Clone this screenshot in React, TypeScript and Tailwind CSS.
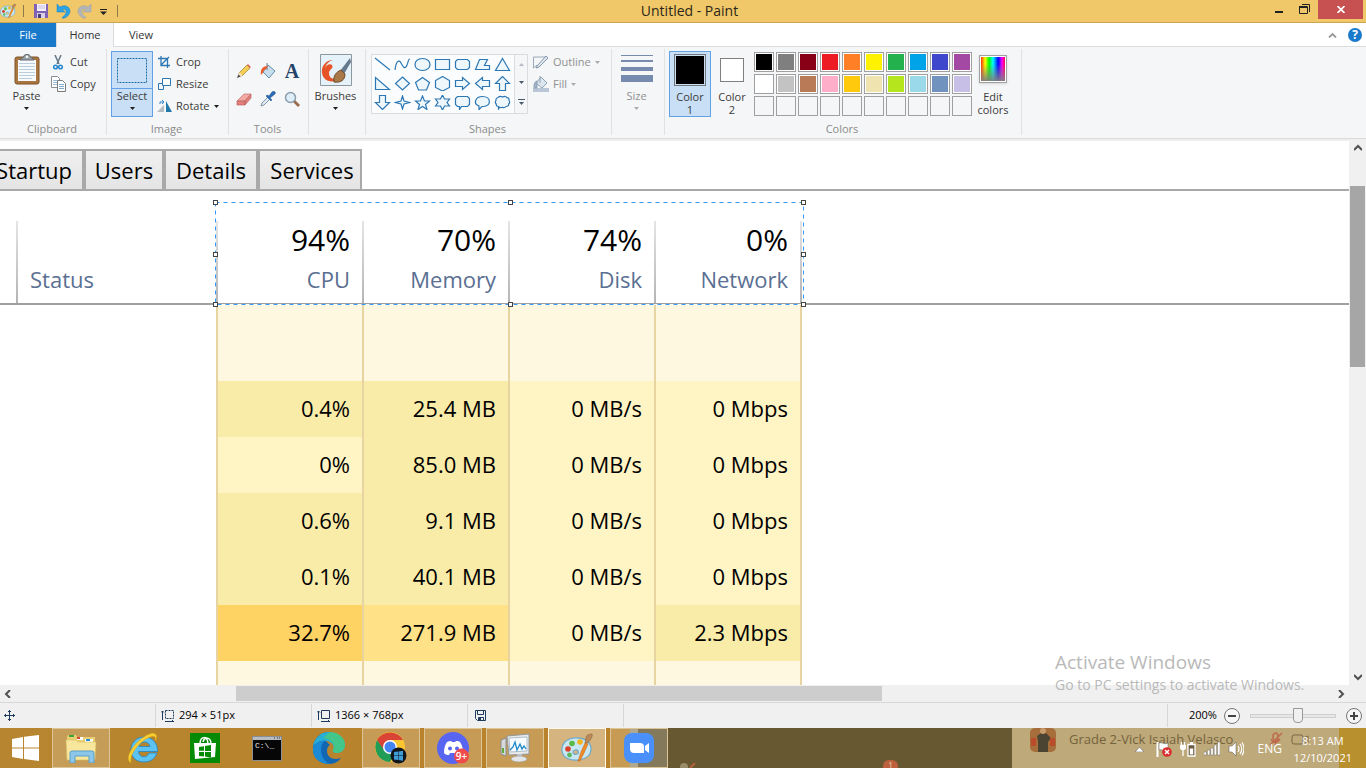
import React from "react";

type Kids = { children?: React.ReactNode };

const Svg = ({ w, h, vb, cls = "", children }: { w: number; h: number; vb?: string; cls?: string } & Kids) => (
  <svg width={w} height={h} viewBox={vb ?? `0 0 ${w} ${h}`} className={`block shrink-0 ${cls}`} fill="none" aria-hidden="true">
    {children}
  </svg>
);

const Caret = ({ color = "#1e1e1e" }: { color?: string }) => (
  <Svg w={5} h={3}>
    <path d="M0 0h5L2.5 3z" fill={color} />
  </Svg>
);

const Palette = ({ size }: { size: number }) => (
  <Svg w={size} h={size} vb="0 0 32 32">
    <path d="M13 6C5 7 0 12 1 19c1 7 8 10 17 9 7-1 12-5 12-11 0-8-8-12-17-11zm3 16c-2 1-4 0-4-2s4-3 5-1 0 3-1 3z" fill="#c9e6f3" stroke="#6aa9c9" strokeWidth="1.2" />
    <circle cx="7" cy="17" r="2.8" fill="#d9402b" />
    <circle cx="11" cy="11.500" r="2.800" fill="#58b947" />
    <circle cx="19" cy="10" r="2.800" fill="#f1b51c" />
    <circle cx="8.500" cy="23" r="2.400" fill="#5cb85c" />
    <path d="M17 29l3-9 4-9 3 1-4 9-4 8z" fill="#f08a24" stroke="#bd5f12" strokeWidth=".5" />
    <path d="M24 11l1-5c0-3 3-4 6-4 1 2-1 5-4 9z" fill="#b98a5a" stroke="#8a5c33" strokeWidth=".5" />
  </Svg>
);

const TitleBar = () => (
  <header className="flex h-[23px] shrink-0 items-center border-b border-[#c9a551] bg-[#f0c869]">
    <div className="flex flex-1 items-center">
      <Palette size={16} />
      <span className="ml-[7px] h-3 w-px bg-[#8f7a4c]" />
      <button aria-label="Save" className="ml-2.5">
        <Svg w={14} h={14}>
          <path d="M0 0h14v14H0z" fill="#8161b4" />
          <path d="M3 0h9v7H3z" fill="#f4f0fa" />
          <path d="M3 9h8v5H3z" fill="#d8d0e4" />
          <path d="M4 10h3v4H4z" fill="#4b3a78" />
          <path d="M4 2h7M4 4h7" stroke="#cabfe0" />
        </Svg>
      </button>
      <button aria-label="Undo" className="ml-2">
        <Svg w={15} h={15}>
          <path d="M1 0v8h8L6.500 5.500C9 4.500 10.500 6 10 8.500c-.4 2-2 3.500-4 5l1 1c4-1 7-4 7-7.500C14 3 9 0 4 3z" fill="#2ba3e6" stroke="#187fc0" strokeWidth=".5" />
        </Svg>
      </button>
      <button aria-label="Redo" className="ml-1.5">
        <Svg w={15} h={15}>
          <path d="M14 0v8H6l2.500-2.500C6 4.500 4.500 6 5 8.500c.4 2 2 3.500 4 5l-1 1c-4-1-7-4-7-7.500C1 3 6 0 11 3z" fill="#b3b6b9" stroke="#999c9f" strokeWidth=".5" />
        </Svg>
      </button>
      <button aria-label="Customize Quick Access Toolbar" className="ml-2 mt-0.5">
        <Svg w={7} h={6}>
          <path d="M0 .5h7" stroke="#222" />
          <path d="M0 2.500h7L3.500 6z" fill="#222" />
        </Svg>
      </button>
      <span className="ml-2.5 h-3 w-px bg-[#8f7a4c]" />
    </div>
    <h1 className="pl-4 font-['Open_Sans',sans-serif] text-sm text-[#2c2718]">Untitled - Paint</h1>
    <div className="flex flex-1 items-start justify-end gap-4 self-stretch pr-[3px]">
      <button aria-label="Minimize" className="mt-[11px]">
        <Svg w={8} h={2}><path d="M0 0h8v2H0z" fill="#222" /></Svg>
      </button>
      <button aria-label="Restore" className="mt-1">
        <Svg w={11} h={10}>
          <path d="M3 .5h7.500V8" stroke="#222" />
          <path d="M.5 3h8v6.500H.5z" stroke="#222" />
          <path d="M0 3h8.500" stroke="#222" strokeWidth="2" />
        </Svg>
      </button>
      <button aria-label="Close" className="-ml-2 flex h-[19px] w-[45px] items-center justify-center bg-[#c75050]">
        <Svg w={8} h={7}><path d="M.5 0l7 7M7.500 0l-7 7" stroke="#fff" strokeWidth="1.700" /></Svg>
      </button>
    </div>
  </header>
);

const TabBar = () => (
  <nav className="flex h-6 shrink-0 bg-white text-[11px] text-[#333]">
    <button className="w-14 bg-[#1979ca] text-white">File</button>
    <button className="w-[58px] border-x border-[#dadbdc] bg-[#f5f6f7]">Home</button>
    <button className="w-[54px] border-b border-[#dadbdc] pt-0.5">View</button>
    <div className="flex flex-1 items-center justify-end gap-[11px] border-b border-[#dadbdc] pr-1">
      <button aria-label="Minimize the Ribbon">
        <Svg w={9} h={6}><path d="M1 5.500L4.500 2 8 5.500" stroke="#999" strokeWidth="1.800" /></Svg>
      </button>
      <button aria-label="Help" className="flex size-3.5 items-center justify-center rounded-full bg-[#1979ca] text-xs font-bold leading-3 text-white">
        ?
      </button>
    </div>
  </nav>
);

const Group = ({ label, w, children }: { label?: string; w: string } & Kids) => (
  <section className={`flex shrink-0 flex-col justify-between border-r border-[#e0e1e3] pt-0.5 ${w}`}>
    <div className="flex h-[68px] items-start">{children}</div>
    <div className="h-3 pr-0.5 text-center leading-3 text-[#8c8c8c]">{label}</div>
  </section>
);

const LineBtn = ({ icon, text, dim, caret }: { icon: React.ReactNode; text: string; dim?: boolean; caret?: boolean }) => (
  <button className={`flex h-[22px] items-center gap-1 ${dim ? "text-[#8f9092]" : ""}`}>
    <span className="flex w-4 justify-center">{icon}</span>
    <span>{text}</span>
    {caret && <Caret color={dim ? "#aaacae" : "#1e1e1e"} />}
  </button>
);

const B = "#2d78b4";
const shapes: { name: string; d: string }[] = [
  { name: "Line", d: "M1 1l15 12" },
  { name: "Curve", d: "M1 13C2 4 5 2 7 6s4 7 6 2 1-6 3-6" },
  { name: "Oval", d: "M8.500 1.500c10 0 10 12 0 12s-10-12 0-12z" },
  { name: "Rectangle", d: "M1.500 2.500h14v10h-14z" },
  { name: "Rounded rectangle", d: "M3.500 2.500h10l2 2v6l-2 2h-10l-2-2v-6z" },
  { name: "Polygon", d: "M5.500 2.500h8l-3 6h5v4h-14z" },
  { name: "Triangle", d: "M8.500 1.500l7 12h-14z" },
  { name: "Right triangle", d: "M1.500 1.500v12h14z" },
  { name: "Diamond", d: "M8.500 1l7 6.500-7 6.500-7-6.500z" },
  { name: "Pentagon", d: "M8.500 1.500l7 5-3 7.500h-8l-3-7.500z" },
  { name: "Hexagon", d: "M8.500.5l7 4v7l-7 3.500-7-3.500v-7z" },
  { name: "Right arrow", d: "M1.500 4.500h7v-3l7 6-7 6v-3h-7z" },
  { name: "Left arrow", d: "M15.500 4.500h-7v-3l-7 6 7 6v-3h7z" },
  { name: "Up arrow", d: "M5.500 14.500v-7h-4l7-7 7 7h-4v7z" },
  { name: "Down arrow", d: "M5.500.5v7h-4l7 7 7-7h-4v-7z" },
  { name: "Four-point star", d: "M8.500 1l1.500 5 5.500 1.500L10 9l-1.500 5L7 9 1.500 7.500 7 6z" },
  { name: "Five-point star", d: "M8.500 1l2 5h5l-4 3.500 1.500 5-4.500-3-4.500 3 1.500-5-4-3.500h5z" },
  { name: "Six-point star", d: "M8.500 0l2 4h5l-2.500 3.500L15.500 11h-5l-2 4-2-4h-5L4 7.500 1.500 4h5z" },
  { name: "Rounded callout", d: "M3.500 1.500h10l2 2v6l-2 2h-6l-2 3v-3h-2l-2-2v-6z" },
  { name: "Oval callout", d: "M8.500 1.500c9 0 9 10 1 10H8l-3 3v-3.500C-1 9 1 1.500 8.500 1.500z" },
  { name: "Cloud callout", d: "M4 2.500q2-2 4.500-.5 3-1.500 4.500.7 2.500.3 2 2.800 1.500 2-.3 3.500.2 2.500-2.700 2.500-1.500 2-3.500.7-1.500.8-2.800 0L4.500 14v-2.500Q2 11.500 2.300 9 .500 7.500 2 5.500 1.500 3 4 2.500z" },
];

const Shapes = () => (
  <div className="ml-[5px] mt-[3px] flex border border-[#dadbdc] bg-[#fbfcfd]">
    <div className="grid grid-cols-7 pb-px">
      {shapes.map((s) => (
        <button key={s.name} aria-label={s.name} className="flex h-[19px] w-5 items-center justify-center">
          <Svg w={17} h={15}>
            <path d={s.d} stroke={B} strokeWidth="1.200" fill={s.name === "Line" || s.name === "Curve" ? "none" : "#eef7fc"} />
          </Svg>
        </button>
      ))}
    </div>
    <div className="ml-0.5 flex w-[13px] flex-col items-center justify-around border-l border-[#dadbdc] bg-[#f5f6f7]">
      <button aria-label="Previous shapes"><Svg w={5} h={3}><path d="M0 3h5L2.500 0z" fill="#b4bac2" /></Svg></button>
      <button aria-label="Next shapes"><Caret color="#4a5b70" /></button>
      <button aria-label="More shapes">
        <Svg w={7} h={6}><path d="M0 .5h7" stroke="#4a5b70" /><path d="M1 3h5L3.500 6z" fill="#4a5b70" /></Svg>
      </button>
    </div>
  </div>
);

const swatches = [
  ["bg-black", "Black"], ["bg-[#7f7f7f]", "Gray-50%"], ["bg-[#880015]", "Dark red"], ["bg-[#ed1c24]", "Red"], ["bg-[#ff7f27]", "Orange"],
  ["bg-[#fff200]", "Yellow"], ["bg-[#22b14c]", "Green"], ["bg-[#00a2e8]", "Turquoise"], ["bg-[#3f48cc]", "Indigo"], ["bg-[#a349a4]", "Purple"],
  ["bg-white", "White"], ["bg-[#c3c3c3]", "Gray-25%"], ["bg-[#b97a57]", "Brown"], ["bg-[#ffaec9]", "Rose"], ["bg-[#ffc90e]", "Gold"],
  ["bg-[#efe4b0]", "Light yellow"], ["bg-[#b5e61d]", "Lime"], ["bg-[#99d9ea]", "Light turquoise"], ["bg-[#7092be]", "Blue-gray"], ["bg-[#c8bfe7]", "Lavender"],
];

const PasteIcon = () => (
  <Svg w={26} h={31}>
    <rect x="1" y="3" width="24" height="27" rx="2" fill="#a9763f" stroke="#7e5429" />
    <path d="M4 6h18v21H4z" fill="#f7fafc" />
    <path d="M5 9.500h16M5 12.500h16M5 15.500h16M5 18.500h16M5 21.500h16M5 24.500h13" stroke="#b9cddc" />
    <path d="M6 6c0-2 4-2 4-4s6-2 6 0 4 2 4 4z" fill="#9ba3aa" stroke="#5f666c" />
    <circle cx="13" cy="2.800" r="1.200" fill="#fff" />
  </Svg>
);

const ToolIcons = () => {
  const icons: [string, React.ReactNode][] = [
    ["Pencil", <><path d="M1 15l2-5 3 3z" fill="#444" /><path d="M3 10L11 2l3 3-8 8z" fill="#f5cf55" stroke="#9a7a2a" strokeWidth=".7" /><path d="M11 2l1-1 3 3-1 1z" fill="#e46a5e" /><path d="M2 11l1.500-1.500 3 3L5 14z" fill="#f6dfba" /></>],
    ["Fill with color", <><path d="M8 2l7 6-6 7-6-6z" fill="#c8deed" stroke="#648cab" /><path d="M7 0v7" stroke="#6b7b88" /><path d="M8 3C3 3 0 6 1 12c3-3 2-5 5-6z" fill="#eb5a2a" /></>],
    ["Text", null],
    ["Eraser", <><path d="M1 10l7-7h7l-6 7z" fill="#f3aaa5" stroke="#c4716d" strokeWidth=".7" /><path d="M1 10h8v4H1zM9 10l6-7v4l-6 7z" fill="#e47f7a" stroke="#b96561" strokeWidth=".7" /></>],
    ["Color picker", <><path d="M1 15l1-3 6-6 2 2-6 6z" fill="#dcebf5" stroke="#6a8297" strokeWidth=".8" /><path d="M6 5l5 5 1-1-2-2 5-4c1-2-1-4-3-2L9 5 7 4z" fill="#2a6cb5" stroke="#1c4a86" strokeWidth=".5" /></>],
    ["Magnifier", <><path d="M10 10l5 5" stroke="#9a6b4a" strokeWidth="2.800" /><circle cx="6.500" cy="6.500" r="5" fill="#deeffa" stroke="#8a9dad" strokeWidth="1.500" /></>],
  ];
  return (
    <div className="ml-[3px] mt-1.5 grid grid-cols-3">
      {icons.map(([n, i]) => (
        <button key={n} aria-label={n} className="flex h-7 w-6 items-center justify-center">
          {i ? <Svg w={16} h={16}>{i}</Svg> : <span className="font-['Liberation_Serif',serif] text-xl font-bold leading-6 text-[#26436b]">A</span>}
        </button>
      ))}
    </div>
  );
};

const Ribbon = () => (
  <div className="flex h-[92px] shrink-0 overflow-hidden border-b border-[#dadbdc] bg-[#f5f6f7] pb-[3px] pt-0.5 text-[11px] leading-[14px] text-[#3b3b3b]">
    <Group label="Clipboard" w="w-[107px]">
      <button className="ml-2 flex w-[37px] flex-col items-center pt-[3px]">
        <PasteIcon />
        <span className="mt-1">Paste</span>
        <span className="mt-1"><Caret /></span>
      </button>
      <div className="ml-[5px]">
        <LineBtn text="Cut" icon={<Svg w={10} h={15}><path d="M2 0l4 9M8 0L4 9" stroke="#64788a" strokeWidth="1.500" /><circle cx="2.500" cy="12" r="1.800" stroke="#2487ce" strokeWidth="1.500" /><circle cx="7.500" cy="12" r="1.800" stroke="#2487ce" strokeWidth="1.500" /></Svg>} />
        <LineBtn text="Copy" icon={<Svg w={15} h={16}><path d="M.5.500h6l2 2v9h-8z" fill="#fff" stroke="#8a8f94" /><path d="M2 4.500h4M2 6.500h4M2 8.500h4" stroke="#9bbbd4" /><path d="M6.500 4.500h5l3 3v8h-8z" fill="#fff" stroke="#777c81" /><path d="M8 8.500h5M8 10.500h5M8 12.500h5" stroke="#7faccd" /></Svg>} />
      </div>
    </Group>
    <Group label="Image" w="w-[122px]">
      <button className="ml-1 flex h-[66px] w-[42px] flex-col items-center border border-[#62a2e4] bg-[#c9dff5]">
        <span className="flex h-[37px] w-full items-center justify-center border-b border-[#62a2e4]">
          <Svg w={30} h={25}><path d="M.5.500h29v24H.5z" stroke="#1f6aa9" strokeDasharray="2 1" /></Svg>
        </span>
        <span>Select</span>
        <span className="mt-1"><Caret /></span>
      </button>
      <div className="ml-[3px]">
        <LineBtn text="Crop" icon={<Svg w={12} h={12}><path d="M3 0v9.500h9M0 2.500h9.500V12M3 9l8-8" stroke={B} strokeWidth="1.300" /></Svg>} />
        <LineBtn text="Resize" icon={<Svg w={13} h={12}><path d="M4.500.500h8v7h-8z" fill="#fff" stroke={B} /><path d="M4 5.500H.500v6h5V8" stroke={B} /></Svg>} />
        <LineBtn text="Rotate" caret icon={<Svg w={15} h={12}><path d="M0 12h7V5z" fill="#b4bcc3" /><path d="M9 12V1l6 11z" fill="#2079a9" /><path d="M3 4V2h4M5 0l2 2-2 2" stroke="#2f86cb" /></Svg>} />
      </div>
    </Group>
    <Group label="Tools" w="w-20"><ToolIcons /></Group>
    <Group w="w-[57px]">
      <button className="flex w-full flex-col items-center pr-[3px] pt-[3px]">
        <Svg w={32} h={32}>
          <path d="M.5.500h31v31H.5z" fill="#e5f2f9" stroke="#8f979e" />
          <path d="M13 6C6 6 1 12 2 19c1 8 10 11 17 6-6 1-10-1-10-6 0-4 5-4 3-8-2-2-6 0-7 3 1-4 4-7 8-8z" fill="#e75427" />
          <path d="M20 17l10-13 1 4-7 12z" fill="#64798d" />
          <path d="M14 28c-1-6 2-10 7-12l4 4c0 6-4 9-11 8z" fill="#a97a48" stroke="#6d4a28" />
        </Svg>
        <span className="mt-[3px]">Brushes</span>
        <span className="mt-1"><Caret /></span>
      </button>
    </Group>
    <Group label="Shapes" w="w-[246px]">
      <Shapes />
      <div className="ml-[5px]">
        <LineBtn dim caret text="Outline" icon={<Svg w={16} h={14}><path d="M12 2H.5v11L4 10" stroke="#9aa9ba" /><path d="M4 11L13 1l2 2-9 9-3 1z" fill="#dfe7ef" stroke="#8497ad" /></Svg>} />
        <LineBtn dim caret text="Fill" icon={<Svg w={16} h={16}><path d="M0 12h16v4H0z" fill="#b8c6d8" /><path d="M8 1l6 6-5 5-6-5z" fill="#dce6ef" stroke="#8fa1b4" /><path d="M7 0v7M4 5c-3 1-3 4-3 7h3z" stroke="#8fa1b4" fill="#9fb2c8" /></Svg>} />
      </div>
    </Group>
    <Group w="w-[53px]">
      <button className="flex w-full flex-col items-center pr-[3px] pt-1 text-[#8f9092]">
        <Svg w={32} h={32}><path d="M0 0h32v1H0zM0 5h32v2H0zM0 12h32v4H0zM0 20h32v7H0z" fill="#778bae" /></Svg>
        <span className="mt-0.5">Size</span>
        <span className="mt-1"><Caret color="#aaacae" /></span>
      </button>
    </Group>
    <Group label="Colors" w="w-[357px]">
      <button className="ml-1 flex h-[66px] w-[42px] flex-col items-center border border-[#62a2e4] bg-[#c9dff5] pt-0.5 leading-[13px]">
        <span className="size-8 border border-[#74777a] bg-black ring-1 ring-inset ring-[#c9dff5]" />
        <span className="mt-1">Color</span><span>1</span>
      </button>
      <button className="flex h-[66px] w-[42px] flex-col items-center pt-[7px] leading-[13px]">
        <span className="size-6 border border-[#808080] bg-white" />
        <span className="mt-2">Color</span><span>2</span>
      </button>
      <div className="ml-px mt-px grid grid-cols-10 gap-0.5">
        {swatches.map(([c, n]) => (
          <button key={n} aria-label={n} className={`size-5 border border-[#a0a0a0] ring-1 ring-inset ring-white ${c}`} />
        ))}
        {Array.from({ length: 10 }, (_, i) => (
          <button key={i} aria-label={`Custom color ${i + 1}`} className="size-5 border border-[#a0a0a0]" />
        ))}
      </div>
      <button className="flex w-[42px] flex-col items-center pt-1 leading-[13px]">
        <span className="size-7 border border-[#a0a0a0] bg-[linear-gradient(to_top,#808080,transparent_70%),linear-gradient(to_right,red,yellow_20%,lime_35%,cyan_50%,blue_70%,magenta_85%,red)] shadow-sm ring-1 ring-inset ring-white" />
        <span className="mt-[7px]">Edit</span><span>colors</span>
      </button>
    </Group>
  </div>
);

const columns = [["94%", "CPU"], ["70%", "Memory"], ["74%", "Disk"], ["0%", "Network"]];
const L = "bg-[#fff4c4]";
const M = "bg-[#f9eca8]";
const rows: [string, string][][] = [
  [["0.4%", M], ["25.4 MB", M], ["0 MB/s", L], ["0 Mbps", L]],
  [["0%", L], ["85.0 MB", M], ["0 MB/s", L], ["0 Mbps", L]],
  [["0.6%", M], ["9.1 MB", M], ["0 MB/s", L], ["0 Mbps", L]],
  [["0.1%", M], ["40.1 MB", M], ["0 MB/s", L], ["0 Mbps", L]],
  [["32.7%", "bg-[#ffd264]"], ["271.9 MB", "bg-[#ffe187]"], ["0 MB/s", L], ["2.3 Mbps", M]],
];

const Bar = () => <span className="h-[82px] w-0.5 shrink-0 self-end bg-linear-to-b from-[#e5e5e5] to-[#b4b4b4]" />;

const BlankRow = ({ h }: { h: string }) => (
  <tr className={h}>
    <td /><td className="border-r-2 border-[#e8d4a0]" />
    {columns.map(([, n]) => <td key={n} className="border-r-2 border-[#e8d4a0] bg-[#fff8e1]" />)}
    <td />
  </tr>
);

const handles = [
  "-left-0.5 -top-0.5", "left-[calc(50%-2px)] -top-0.5", "-right-0.5 -top-0.5",
  "-left-0.5 top-[calc(50%-2px)]", "-right-0.5 top-[calc(50%-2px)]",
  "-left-0.5 -bottom-0.5", "left-[calc(50%-2px)] -bottom-0.5", "-right-0.5 -bottom-0.5",
];

const Canvas = () => (
  <div className="min-w-0 flex-1 overflow-hidden border-t-2 border-[#eee] bg-white pt-2 text-[22px] leading-8 text-black">
    <div className="flex h-[42px] border-b-2 border-[#a9a9a9]" role="tablist">
      {[["Startup", "w-[84px] justify-end border-l-0 pr-2.5"], ["Users", "w-20 justify-center"], ["Details", "w-[94px] justify-center"], ["Services", "w-[104px] justify-center pl-1"]].map(([t, w]) => (
        <button key={t} role="tab" className={`flex shrink-0 items-center border-2 border-b-0 border-[#a9a9a9] bg-linear-to-b from-[#f0f0f0] to-[#e4e4e4] ${w}`}>
          {t}
        </button>
      ))}
    </div>
    <div className="relative">
      <table className="w-full table-fixed border-separate border-spacing-0">
        <colgroup>
          <col className="w-[18px]" /><col className="w-[200px]" />
          {columns.map(([, n]) => <col key={n} className="w-[146px]" />)}
          <col />
        </colgroup>
        <thead>
          <tr>
            <th className="border-b-2 border-[#a0a0a0] p-0"><div className="flex h-28 justify-end"><Bar /></div></th>
            <th className="border-b-2 border-[#a0a0a0] p-0 text-left font-normal text-[#5a6f92]">
              <div className="flex h-28 justify-between"><span className="self-end pb-2 pl-3">Status</span><Bar /></div>
            </th>
            {columns.map(([v, n]) => (
              <th key={n} className="border-b-2 border-[#a0a0a0] p-0 text-right font-normal">
                <div className="flex h-28 justify-end">
                  <div className="flex flex-col justify-end pb-2 pr-3">
                    <span className="text-3xl leading-[46px]">{v}</span>
                    <span className="text-[#5a6f92]">{n}</span>
                  </div>
                  <Bar />
                </div>
              </th>
            ))}
            <th className="border-b-2 border-[#a0a0a0] p-0" />
          </tr>
        </thead>
        <tbody>
          <BlankRow h="h-[76px]" />
          {rows.map((r, i) => (
            <tr key={i} className="h-14">
              <td /><td className="border-r-2 border-[#e8d4a0]" />
              {r.map(([t, c], j) => <td key={j} className={`border-r-2 border-[#e8d4a0] pb-0.5 pl-0 pr-3 pt-0 text-right ${c}`}>{t}</td>)}
              <td />
            </tr>
          ))}
          <BlankRow h="h-14" />
        </tbody>
      </table>
      <div className="absolute left-[215px] top-[11px] h-[103px] w-[589px]">
        <svg className="absolute inset-0 size-full" fill="none" aria-hidden="true">
          <rect x=".5" y=".5" width="588" height="102" stroke="#fff" />
          <rect x=".5" y=".5" width="588" height="102" stroke="#3399ff" strokeDasharray="4 4" />
        </svg>
        {handles.map((p) => <span key={p} className={`absolute size-[5px] border border-[#444] bg-white ${p}`} />)}
      </div>
    </div>
  </div>
);

const Chevron = ({ d, label }: { d: string; label: string }) => (
  <button aria-label={label} className="flex size-4 shrink-0 items-center justify-center">
    <Svg w={8} h={8}><path d={d} stroke="#505050" strokeWidth="2" /></Svg>
  </button>
);

const StatusBar = () => (
  <footer className="flex h-[26px] shrink-0 items-center border-t border-[#d7d7d7] bg-[#f0f0f0] text-[11px] text-black *:h-[23px]">
    <div className="flex w-[156px] items-center border-r border-[#d7d7d7] pl-1">
      <Svg w={11} h={11}><path d="M5.500 0v11M0 5.500h11M4 1.500h3M4 9.500h3M1.500 4v3M9.500 4v3" stroke="#1e3a5f" /></Svg>
    </div>
    <div className="flex w-[156px] items-center gap-[5px] border-r border-[#d7d7d7] pl-[5px]">
      <Svg w={13} h={12}><path d="M1.500 1v9M0 2.500L1.500 1 3 2.500M4 11.500h9M11 10l1.500 1.500" stroke="#1e3a5f" /><path d="M4.500.500h8v8h-8z" stroke="#1e3a5f" strokeDasharray="2 1" /></Svg>
      294 × 51px
    </div>
    <div className="flex w-[156px] items-center gap-[5px] border-r border-[#d7d7d7] pl-[5px]">
      <Svg w={13} h={12}><path d="M1.500 1v9M0 2.500L1.500 1 3 2.500M4 11.500h9M11 10l1.500 1.500" stroke="#1e3a5f" /><path d="M4.500.500h8v8h-8z" stroke="#1e3a5f" /></Svg>
      1366 × 768px
    </div>
    <div className="flex w-[156px] items-center border-r border-[#d7d7d7] pl-[7px]">
      <Svg w={11} h={11}><path d="M.500.500h10v10h-8l-2-2zM2.500.500v4h6v-4M3.500 10.500v-3h5v3" stroke="#1e3a5f" /><path d="M4 8h2v2H4z" fill="#1e3a5f" /></Svg>
    </div>
    <div className="flex-1 border-r border-[#d7d7d7]" />
    <div className="flex items-center justify-end pl-[21px] pr-1">
      <span className="w-7">200%</span>
      <button aria-label="Zoom out" className="ml-[7px]">
        <Svg w={16} h={16}><circle cx="8" cy="8" r="7.500" fill="#f6f6f6" stroke="#777" /><path d="M4 8h8" stroke="#444" strokeWidth="2" /></Svg>
      </button>
      <input
        type="range" aria-label="Zoom" min={0} max={100} defaultValue={57}
        className="mx-2.5 h-4 w-[86px] appearance-none bg-transparent [&::-webkit-slider-runnable-track]:h-1 [&::-webkit-slider-runnable-track]:border [&::-webkit-slider-runnable-track]:border-[#cfcfcf] [&::-webkit-slider-runnable-track]:bg-[#e7e7e7] [&::-webkit-slider-thumb]:-mt-[7px] [&::-webkit-slider-thumb]:h-[15px] [&::-webkit-slider-thumb]:w-[10px] [&::-webkit-slider-thumb]:appearance-none [&::-webkit-slider-thumb]:rounded-b [&::-webkit-slider-thumb]:border [&::-webkit-slider-thumb]:border-[#999] [&::-webkit-slider-thumb]:bg-[#f0f0f0]"
      />
      <button aria-label="Zoom in">
        <Svg w={16} h={16}><circle cx="8" cy="8" r="7.500" fill="#f6f6f6" stroke="#777" /><path d="M4 8h8M8 4v8" stroke="#444" strokeWidth="2" /></Svg>
      </button>
    </div>
  </footer>
);

const apps: { name: string; open?: boolean; active?: boolean; icon: React.ReactNode }[] = [
  { name: "File Explorer", open: true, icon: <Svg w={32} h={30}>
    <path d="M2 4l1-2h8l1 2h18v22H2z" fill="#e9cf72" /><path d="M4 2h5v2H4z" fill="#3ba43f" /><path d="M12 4h6v3h-6z" fill="#fff" /><path d="M12 4h3v2h-3z" fill="#d64a32" /><path d="M20 6h8v3h-8z" fill="#fff" /><path d="M21 6h4v2h-4z" fill="#2b8fd8" />
    <path d="M1 7h10l2 2h18l-1 18H2z" fill="#f7e69c" stroke="#d9bd5c" strokeWidth=".6" />
    <path d="M5 30V20q0-2 2-2h20q2 0 2 2v10h-5v-7H10v7z" fill="#8cc6e8" stroke="#5b9ec9" />
  </Svg> },
  { name: "Internet Explorer", icon: <Svg w={32} h={32}>
    <path fillRule="evenodd" d="M30 21c-2 6-7 9-13 9C9 30 4 25 4 18S9 5 17 5s14 6 13.500 14.500H11.500c.5 6 8 7.500 10.500 1.500zM12 14.500h11c-1-6-10-6-11 0z" fill="#5cc3f2" stroke="#2384c4" strokeWidth=".8" />
    <path d="M4 31C-5 26 11 5 24 1.500c5-1 7 2 4.500 7.500.5-4.500-1.500-5.500-5.500-4C13 9 2 22 4 31z" fill="#f8cf32" stroke="#d6a514" strokeWidth=".5" />
  </Svg> },
  { name: "Store", icon: <Svg w={30} h={30}>
    <path d="M0 0h30v30H0z" fill="#048a04" /><path d="M4 10l19 0 3 0-1 14-20 2z" fill="#fff" />
    <path d="M10 11c0-8 8-9 8 0M13 9c1-6 8-5 8 2" stroke="#fff" strokeWidth="1.500" />
    <path d="M9 14l5-.7v4.500H9zM15 13l6-1v6h-6zM9 19h5v4.500L9 23zM15 19h6v5.500l-6-1z" fill="#048a04" />
  </Svg> },
  { name: "Command Prompt", icon: <Svg w={30} h={25}>
    <path d="M.500.500h29v24H.500z" fill="#060606" stroke="#8b8f93" /><path d="M1 1h28v3H1z" fill="#b7bcc1" /><path d="M22 2h1M25 2h1M27 2h1" stroke="#333" />
    <text x="3" y="12" fontSize="8" fontFamily="Liberation Mono, monospace" fill="#e8e8e8">C:\_</text>
  </Svg> },
  { name: "Microsoft Edge", icon: <Svg w={32} h={32}>
    <path d="M16 0C7 0 0 7 0 16c0 10 7 16 16 16 5 0 9-2 12-6-8 3-14-1-14-7 0-3 1-5 3-6L10 6z" fill="#1267b4" />
    <path d="M0 15C1 6 8 0 16 0c9 0 16 6 16 13 0 5-4 8-8 8-3 0-5-1-4-3 2-3 0-8-6-9C8 8 2 11 0 15z" fill="#27afd8" />
    <path d="M17 0c9 0 15 6 15 13 0 5-4 8-8 8-3 0-5-1-4-3 3-5-1-11-10-12z" fill="#4fd06a" opacity=".7" />
    <path d="M0 17c1-5 6-9 12-8-6 3-6 18 5 23C7 32-1 26 0 17z" fill="#1c8ad4" />
  </Svg> },
  { name: "Google Chrome", open: true, icon: <Svg w={32} h={32}>
    <circle cx="15" cy="15" r="15" fill="#fbc62f" /><path d="M2 8a15 15 0 0126 0H15l-6.500 11z" fill="#da4437" /><path d="M2 8a15 15 0 0013 22l6-11-12-1z" fill="#229d58" />
    <circle cx="15" cy="15" r="7" fill="#fff" /><circle cx="15" cy="15" r="5.500" fill="#4385f4" />
    <circle cx="23.500" cy="23.500" r="8" fill="#11151c" /><path d="M19 20l4-.5v4h-4zM23.500 19.400l4.500-.6v4.700h-4.500zM19 24h4v4l-4-.5zM23.500 24H28v4.700l-4.500-.6z" fill="#3f9ed8" />
  </Svg> },
  { name: "Discord", open: true, icon: <Svg w={32} h={32}>
    <circle cx="16" cy="16" r="16" fill="#5865f2" />
    <path d="M7 21c0-5 1-8 3-11 2-1 3-1 4-1l1 1h3l1-1c2 0 3 0 4 1 2 3 3 6 3 11-2 2-3 2-5 2l-1-2h-7l-1 2c-2 0-3 0-5-2z" fill="#fff" />
    <circle cx="13" cy="16.500" r="2" fill="#5865f2" /><circle cx="20" cy="16.500" r="2" fill="#5865f2" />
    <circle cx="24.500" cy="24" r="7.500" fill="#f04b4b" />
    <text x="24.500" y="27.500" textAnchor="middle" fontSize="10" fontFamily="Open Sans, sans-serif" fontWeight="600" fill="#fff">9+</text>
  </Svg> },
  { name: "Task Manager", open: true, icon: <Svg w={32} h={30}>
    <path d="M2 7l5-2v18l-5-2z" fill="#d7d9db" stroke="#8a8e91" /><path d="M3 15h2v5H3z" fill="#5dab3c" />
    <path d="M8 3l22-2v20l-20 1z" fill="#e8eaeb" stroke="#94989b" /><path d="M10 5l18-1v14l-17 1z" fill="#f7fbfe" stroke="#adbfcb" />
    <path d="M11 17l3-3 2-5 2 8 3-6 2 5 2-3 2 3" stroke="#1d87c7" strokeWidth="1.300" />
    <path d="M18 21h5v4h-5z" fill="#c2c5c7" /><ellipse cx="20" cy="26" rx="8" ry="3" fill="#e3e5e6" stroke="#96999b" strokeWidth=".6" />
  </Svg> },
  { name: "Paint", open: true, active: true, icon: <Palette size={32} /> },
  { name: "Zoom", open: true, icon: <Svg w={30} h={30}>
    <rect width="30" height="30" rx="8" fill="#4a90fb" /><path d="M6 10h10q4 0 4 4v6H10q-4 0-4-4zM21 13l4-3v10l-4-3z" fill="#fff" />
  </Svg> },
];

const Taskbar = () => (
  <div className="relative flex h-10 shrink-0 overflow-hidden bg-[linear-gradient(90deg,#b78530_0,#b9822a_630px,#9b9475_630px,#9b9475_638px,#675832_638px,#675832_1012px,#bea97a_1012px,#bea97a_1339px,#b9902e_1339px)]">
    <button aria-label="Start" className="flex w-[52px] items-center justify-center pr-0.5">
      <Svg w={27} h={26}><path d="M0 4l11-2v10.500H0zM12 1.800L27 0v12.500H12zM0 13.500h11V24L0 22zM12 13.500h15V26l-15-2z" fill="#fff" /></Svg>
    </button>
    <div className="flex gap-1">
      {apps.map((a) => (
        <button key={a.name} aria-label={a.name} className={`flex w-[58px] items-center justify-center border ${a.active ? "border-[#fff9e8] bg-white/40" : a.open ? "border-[#dcc597] bg-white/20" : "border-transparent"}`}>
          {a.icon}
        </button>
      ))}
    </div>
    <div className="flex flex-1 items-end pl-3" aria-hidden="true">
      <Svg w={16} h={5}><circle cx="4" cy="4" r="4" fill="#9a8c69" /><path d="M10 5l5-5" stroke="#b5623c" strokeWidth="2" /></Svg>
      <span className="ml-[187px] h-2 w-[15px] rounded-t-md bg-[#bc603d] text-center text-[9px] leading-[11px] text-[#e6c7ae]">1</span>
    </div>
    <div className="absolute right-0 top-0 flex h-6 w-[336px] items-start text-[13px] leading-[22px] text-[#75633c]">
      <Svg w={26} h={24}>
        <rect width="26" height="24" rx="5" fill="#a56e3b" /><path d="M7 8l4-3 5 0 5 5-3 4v10H8V13z" fill="#4c4432" /><circle cx="13" cy="3" r="3" fill="#c89b6a" /><path d="M1 10h5v8H1zM20 10h5v8h-5z" fill="#ba4c2c" />
      </Svg>
      <span className="ml-[13px] w-[200px]">Grade 2-Vick Isaiah Velasco</span>
      <Svg w={14} h={15} cls="mt-1"><path d="M4 7V3q3-4 5 0v4q-2 4-5 0M2 7q4 7 9 0M6.500 11v3M1 13L13 1" stroke="#c06a4c" strokeWidth="1.500" /></Svg>
      <Svg w={18} h={11} cls="ml-2 mt-1.5"><rect x="1" y="1" width="11" height="9" rx="2" stroke="#786744" /><path d="M12 4l5-2v7l-5-2" stroke="#786744" /></Svg>
    </div>
    <div className="relative flex items-center pr-3.5 pt-0.5 text-[11px] text-white">
      <button aria-label="Show hidden icons"><Svg w={9} h={5}><path d="M0 5h9L4.500 0z" fill="#fff" stroke="#555" strokeWidth=".5" /></Svg></button>
      <button aria-label="Action Center" className="ml-3">
        <Svg w={16} h={16}><path d="M1.500 1v15" stroke="#fff" strokeWidth="2" /><path d="M3 2c4-1 5 2 9 0v7c-4 2-5-1-9 0z" fill="#fff" stroke="#555" strokeWidth=".5" /><circle cx="11" cy="11" r="4.800" fill="#d92d2d" /><path d="M9 9l4 4M13 9l-4 4" stroke="#fff" strokeWidth="1.500" /></Svg>
      </button>
      <button aria-label="Battery" className="ml-2">
        <Svg w={16} h={16}><path d="M0 4h6v3q0 2-3 2T0 7z" fill="#fff" /><path d="M1.500 1v3M4.500 1v3M3 9v6" stroke="#fff" strokeWidth="1.300" /><path d="M8 3.500h7v11.500H8z" fill="#6a5c40" stroke="#fff" strokeWidth="1.300" /><path d="M10 1h3v2h-3zM9.800 7.500h3.400v6H9.800z" fill="#fff" /></Svg>
      </button>
      <button aria-label="Network" className="ml-2">
        <Svg w={16} h={14}><path d="M0 10h2.400v3H0zM3.400 8h2.400v5H3.400zM6.800 6h2.400v7H6.800zM10.200 3h2.400v10h-2.400zM13.600 0H16v13h-2.400z" fill="#fff" stroke="#555" strokeWidth=".4" /></Svg>
      </button>
      <button aria-label="Volume" className="ml-2">
        <Svg w={16} h={16}><path d="M1 5h3l4-4v14l-4-4H1z" fill="#fff" stroke="#555" strokeWidth=".5" /><path d="M10 5q2 3 0 6M12 3q3.500 5 0 10M14 1.500q4 6.500 0 13" stroke="#fff" strokeWidth="1.200" /></Svg>
      </button>
      <span className="ml-3.5 w-6 text-xs">ENG</span>
      <div className="ml-3 text-center leading-[17px]"><div>8:13 AM</div><div>12/10/2021</div></div>
    </div>
  </div>
);

export default function App() {
  return (
    <div className="relative flex h-screen flex-col overflow-hidden bg-[#f0f0f0] font-['Open_Sans','Noto_Sans',sans-serif]">
      <TitleBar />
      <TabBar />
      <Ribbon />
      <main className="flex min-h-0 flex-1">
        <Canvas />
        <div className="flex w-[17px] shrink-0 flex-col items-center bg-[#f0f0f0] pt-px">
          <Chevron label="Scroll up" d="M0 6l4-4 4 4" />
          <div className="mt-[30px] h-[181px] w-[15px] bg-[#a6a6a6]" />
          <div className="flex-1" />
          <Chevron label="Scroll down" d="M0 2l4 4 4-4" />
        </div>
      </main>
      <div className="flex h-[17px] shrink-0 items-center bg-[#f0f0f0] pr-[17px]">
        <Chevron label="Scroll left" d="M6 0L2 4l4 4" />
        <div className="grid h-[15px] flex-1 grid-cols-[220fr_646fr_451fr]"><div className="col-start-2 bg-[#cdcdcd]" /></div>
        <Chevron label="Scroll right" d="M2 0l4 4-4 4" />
      </div>
      <StatusBar />
      <Taskbar />
      <div className="pointer-events-none absolute bottom-[72px] right-14 w-[255px] whitespace-nowrap text-sm leading-[22px] text-[#b9b9b9]">
        <div className="text-[19px] leading-6">Activate Windows</div>
        <div>Go to PC settings to activate Windows.</div>
      </div>
    </div>
  );
}
